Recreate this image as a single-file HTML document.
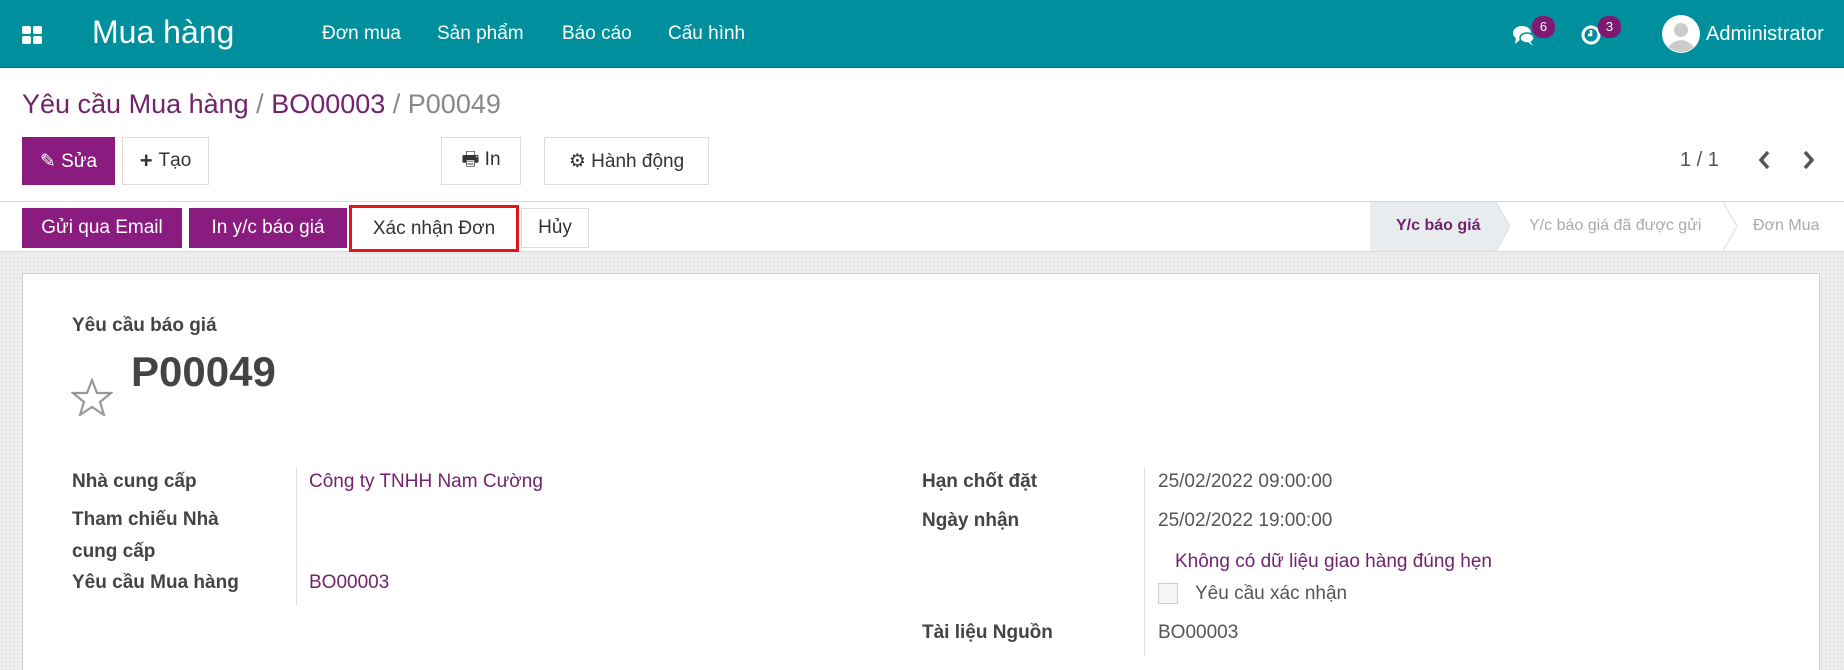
<!DOCTYPE html>
<html><head><meta charset="utf-8">
<style>
*{margin:0;padding:0;box-sizing:border-box}
html,body{width:1844px;height:670px;overflow:hidden}
body{background:#fff;font-family:"Liberation Sans",sans-serif;color:#4c4c4c;position:relative}
.a{position:absolute;white-space:nowrap}
.nav{position:absolute;left:0;top:0;width:1844px;height:68px;background:#00909d;border-bottom:1px solid #0a6b73}
.nav .a{color:#fff}
.btn{position:absolute;border:1px solid #dcdcdc;background:#fff;color:#333;font-size:19px;display:flex;align-items:center;justify-content:center;gap:6px}
.pb{background:#8a1b7f;border-color:#8a1b7f;color:#fff}
.lbl{position:absolute;font-size:19px;font-weight:bold;color:#444;white-space:nowrap;transform:translateY(-50%)}
.val{position:absolute;font-size:19px;color:#555;white-space:nowrap;transform:translateY(-50%)}
.pur{color:#71236b}
.badge{position:absolute;background:#7e1a72;color:#fff;font-size:13px;border-radius:10px;width:23px;height:22px;text-align:center;line-height:22px}
</style></head><body>
<div class="nav">
  <svg class="a" style="left:22px;top:26px" width="20" height="18" viewBox="0 0 20 18"><rect x="0" y="0" width="9" height="8" rx="2" fill="#fff"/><rect x="11" y="0" width="9" height="8" rx="2" fill="#fff"/><rect x="0" y="10" width="9" height="8" rx="2" fill="#fff"/><rect x="11" y="10" width="9" height="8" rx="2" fill="#fff"/></svg>
  <div class="a" style="left:92px;top:14px;font-size:32px">Mua hàng</div>
  <div class="a" style="left:322px;top:23px;font-size:19px">Đơn mua</div>
  <div class="a" style="left:437px;top:23px;font-size:19px">Sản phẩm</div>
  <div class="a" style="left:562px;top:23px;font-size:19px">Báo cáo</div>
  <div class="a" style="left:668px;top:23px;font-size:19px">Cấu hình</div>
  <svg class="a" style="left:1512px;top:25px" width="24" height="22" viewBox="0 0 24 22"><ellipse cx="10" cy="8" rx="9" ry="7" fill="#fff"/><path d="M4 13 L3 19 L9 14Z" fill="#fff"/><ellipse cx="15" cy="13" rx="7" ry="5" fill="#fff" stroke="#00909d" stroke-width="1.5"/><path d="M18 16 L21 21 L16 17Z" fill="#fff"/></svg>
  <div class="badge" style="left:1532px;top:16px">6</div>
  <svg class="a" style="left:1580px;top:24px" width="22" height="22" viewBox="0 0 22 22"><circle cx="11" cy="11" r="8" fill="none" stroke="#fff" stroke-width="3"/><path d="M11 6 V11 H8" stroke="#fff" stroke-width="2.5" fill="none"/></svg>
  <div class="badge" style="left:1598px;top:16px">3</div>
  <svg class="a" style="left:1662px;top:15px" width="38" height="38" viewBox="0 0 38 38"><circle cx="19" cy="19" r="19" fill="#fff"/><circle cx="19" cy="15" r="7" fill="#ccc"/><path d="M6 32 Q19 18 32 32 Q19 42 6 32Z" fill="#ccc"/></svg>
  <div class="a" style="left:1706px;top:23px;font-size:20px">Administrator</div>
</div>

<div class="a" style="left:22px;top:89px;font-size:27px;color:#71236b">Yêu cầu Mua hàng <span style="color:#888">/</span> BO00003 <span style="color:#888">/ P00049</span></div>

<div class="btn pb" style="left:22px;top:137px;width:93px;height:48px">✎ Sửa</div>
<div class="btn" style="left:122px;top:137px;width:87px;height:48px"><b style="font-size:22px">+</b>Tạo</div>
<div class="btn" style="left:441px;top:137px;width:80px;height:48px">🖶 In</div>
<div class="btn" style="left:544px;top:137px;width:165px;height:48px">⚙ Hành động</div>
<div class="a" style="left:1680px;top:149px;font-size:20px;color:#555">1 / 1</div>
<svg class="a" style="left:1757px;top:150px" width="14" height="20" viewBox="0 0 14 20"><path d="M11 2 L4 10 L11 18" stroke="#555" stroke-width="3.5" fill="none"/></svg>
<svg class="a" style="left:1802px;top:150px" width="14" height="20" viewBox="0 0 14 20"><path d="M3 2 L10 10 L3 18" stroke="#555" stroke-width="3.5" fill="none"/></svg>

<div class="a" style="left:0;top:201px;width:1844px;height:1px;background:#d8d8d8"></div>
<div class="a" style="left:0;top:252px;width:1844px;height:418px;background:#eeeeee;background-image:radial-gradient(#e2e2e2 1px,transparent 1px);background-size:4px 4px"></div>
<div class="a" style="left:0;top:251px;width:1844px;height:1px;background:#d8d8d8"></div>

<div class="btn pb" style="left:22px;top:208px;width:160px;height:40px">Gửi qua Email</div>
<div class="btn pb" style="left:189px;top:208px;width:158px;height:40px">In y/c báo giá</div>
<div class="btn" style="left:349px;top:205px;width:170px;height:47px;border:3px solid #e3141b">Xác nhận Đơn</div>
<div class="btn" style="left:521px;top:208px;width:68px;height:40px">Hủy</div>

<svg class="a" style="left:1370px;top:202px" width="474" height="49" viewBox="0 0 474 49"><path d="M0 0 H126 L140 24.5 L126 49 H0Z" fill="#e9ecef"/><path d="M126 0 L140 24.5 L126 49" stroke="#ddd" fill="none"/><path d="M353 0 L367 24.5 L353 49" stroke="#ddd" fill="none"/></svg>
<div class="a" style="left:1396px;top:217px;font-size:16px;font-weight:bold;color:#71236b">Y/c báo giá</div>
<div class="a" style="left:1529px;top:217px;font-size:16px;color:#aaa">Y/c báo giá đã được gửi</div>
<div class="a" style="left:1753px;top:217px;font-size:16px;color:#aaa">Đơn Mua</div>

<div class="a" style="left:22px;top:273px;width:1798px;height:397px;background:#fff;border:1px solid #d0d0d0;border-bottom:none"></div>
<div class="lbl" style="left:72px;top:326px;font-size:19px">Yêu cầu báo giá</div>
<div class="a" style="left:131px;top:348px;font-size:42px;font-weight:bold;color:#444">P00049</div>
<svg class="a" style="left:71px;top:378px" width="42" height="38" viewBox="0 0 42 38"><path d="M21 2 L26 15 L40 15 L29 24 L33 37 L21 29 L9 37 L13 24 L2 15 L16 15Z" fill="none" stroke="#999" stroke-width="2.2"/></svg>

<div class="a" style="left:296px;top:468px;width:1px;height:138px;background:#ddd"></div>
<div class="lbl" style="left:72px;top:482px">Nhà cung cấp</div>
<div class="val pur" style="left:309px;top:482px">Công ty TNHH Nam Cường</div>
<div class="lbl" style="left:72px;top:520px">Tham chiếu Nhà</div>
<div class="lbl" style="left:72px;top:552px">cung cấp</div>
<div class="lbl" style="left:72px;top:583px">Yêu cầu Mua hàng</div>
<div class="val pur" style="left:309px;top:583px">BO00003</div>

<div class="a" style="left:1144px;top:468px;width:1px;height:188px;background:#ddd"></div>
<div class="lbl" style="left:922px;top:482px">Hạn chốt đặt</div>
<div class="val" style="left:1158px;top:482px">25/02/2022 09:00:00</div>
<div class="lbl" style="left:922px;top:521px">Ngày nhận</div>
<div class="val" style="left:1158px;top:521px">25/02/2022 19:00:00</div>
<div class="val pur" style="left:1175px;top:562px">Không có dữ liệu giao hàng đúng hẹn</div>
<div class="a" style="left:1158px;top:583px;width:20px;height:21px;border:1px solid #ccc;background:#f6f6f6"></div>
<div class="val" style="left:1195px;top:594px">Yêu cầu xác nhận</div>
<div class="lbl" style="left:922px;top:633px">Tài liệu Nguồn</div>
<div class="val" style="left:1158px;top:633px">BO00003</div>
</body></html>
